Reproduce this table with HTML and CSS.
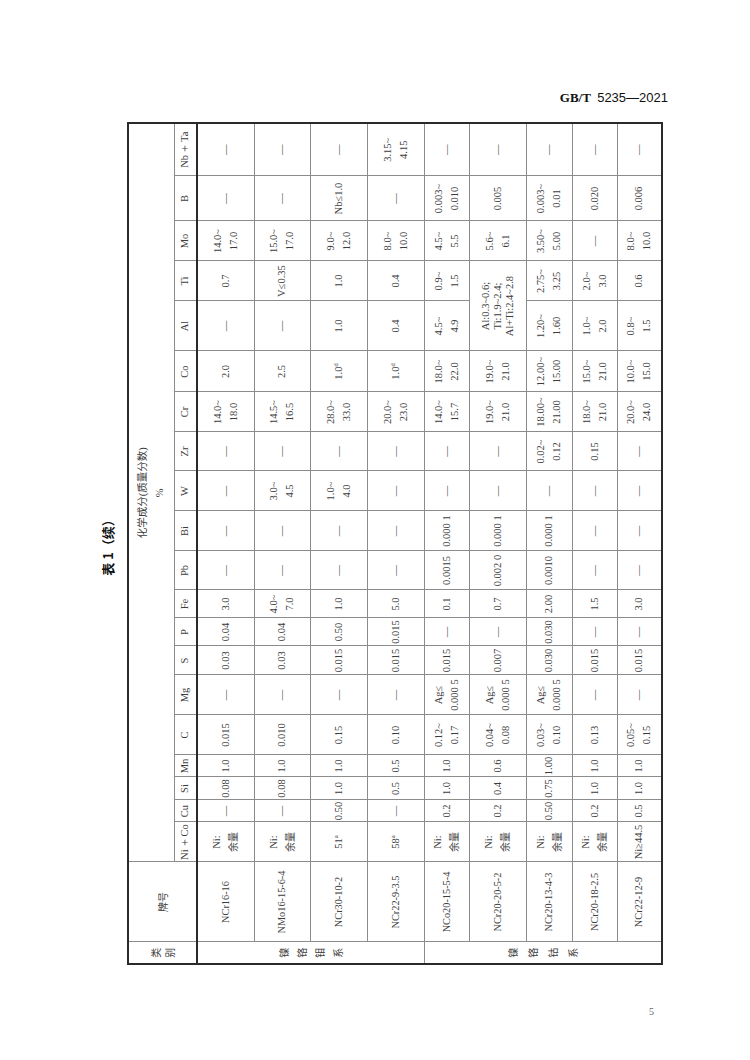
FILE: index.html
```html
<!DOCTYPE html>
<html lang="zh">
<head>
<meta charset="utf-8">
<title>GB/T 5235—2021 表1（续）</title>
<link rel="stylesheet" href="styles.css">
</head>
<body>
<div class="page">
  <div class="doc-head"><span class="std">GB/T</span> <span class="num">5235—2021</span></div>
  <div class="rot-box">
    <div class="sheet">
      <div class="caption">表 1（续）</div>
      <table class="chem">
        <colgroup>
          <col class="w22"><col class="w80"><col class="w40"><col class="w22"><col class="w23"><col class="w22"><col class="w40"><col class="w40"><col class="w29"><col class="w28"><col class="w28"><col class="w39"><col class="w40"><col class="w40"><col class="w39"><col class="w40"><col class="w41"><col class="w50"><col class="w40"><col class="w40"><col class="w45"><col class="w53">
        </colgroup>
        <thead>
          <tr class="h46">
            <th rowspan="2" class="cat-h">类<br>别</th>
            <th rowspan="2" class="grade-h">牌号</th>
            <th colspan="20" class="comp">化学成分(质量分数)<br>%</th>
          </tr>
          <tr class="h23 el">
            <th>Ni<span class="plus">＋</span>Co</th><th>Cu</th><th>Si</th><th>Mn</th><th>C</th><th>Mg</th><th>S</th><th>P</th><th>Fe</th><th>Pb</th><th>Bi</th><th>W</th><th>Zr</th><th>Cr</th><th>Co</th><th>Al</th><th>Ti</th><th>Mo</th><th>B</th><th>Nb<span class="plus">＋</span>Ta</th>
          </tr>
        </thead>
        <tbody>
          <tr class="h57">
            <td rowspan="4" class="cat cat1">镍<br>铬<br>钼<br>系</td>
            <td class="grade">NCr16-16</td>
            <td>Ni:<br><span class="cjk">余量</span></td><td>—</td><td>0.08</td><td>1.0</td><td>0.015</td><td>—</td><td>0.03</td><td>0.04</td><td>3.0</td><td>—</td><td>—</td><td>—</td><td>—</td><td>14.0~<br>18.0</td><td>2.0</td><td>—</td><td>0.7</td><td>14.0~<br>17.0</td><td>—</td><td>—</td>
          </tr>
          <tr class="h56">
            <td class="grade">NMo16-15-6-4</td>
            <td>Ni:<br><span class="cjk">余量</span></td><td>—</td><td>0.08</td><td>1.0</td><td>0.010</td><td>—</td><td>0.03</td><td>0.04</td><td>4.0~<br>7.0</td><td>—</td><td>—</td><td>3.0~<br>4.5</td><td>—</td><td>14.5~<br>16.5</td><td>2.5</td><td>—</td><td>V≤0.35</td><td>15.0~<br>17.0</td><td>—</td><td>—</td>
          </tr>
          <tr class="h57">
            <td class="grade">NCr30-10-2</td>
            <td>51<sup class="fn">a</sup></td><td>0.50</td><td>1.0</td><td>1.0</td><td>0.15</td><td>—</td><td>0.015</td><td>0.50</td><td>1.0</td><td>—</td><td>—</td><td>1.0~<br>4.0</td><td>—</td><td>28.0~<br>33.0</td><td>1.0<sup class="fn">d</sup></td><td>1.0</td><td>1.0</td><td>9.0~<br>12.0</td><td>Nb≤1.0</td><td>—</td>
          </tr>
          <tr class="h57 grp-end">
            <td class="grade">NCr22-9-3.5</td>
            <td>58<sup class="fn">a</sup></td><td>—</td><td>0.5</td><td>0.5</td><td>0.10</td><td>—</td><td>0.015</td><td>0.015</td><td>5.0</td><td>—</td><td>—</td><td>—</td><td>—</td><td>20.0~<br>23.0</td><td>1.0<sup class="fn">d</sup></td><td>0.4</td><td>0.4</td><td>8.0~<br>10.0</td><td>—</td><td>3.15~<br>4.15</td>
          </tr>
          <tr class="h45">
            <td rowspan="5" class="cat cat2">镍<br>铬<br>钴<br>系</td>
            <td class="grade">NCo20-15-5-4</td>
            <td>Ni:<br><span class="cjk">余量</span></td><td>0.2</td><td>1.0</td><td>1.0</td><td>0.12~<br>0.17</td><td>Ag≤<br>0.000 5</td><td>0.015</td><td>—</td><td>0.1</td><td>0.0015</td><td>0.000 1</td><td>—</td><td>—</td><td>14.0~<br>15.7</td><td>18.0~<br>22.0</td><td>4.5~<br>4.9</td><td>0.9~<br>1.5</td><td>4.5~<br>5.5</td><td>0.003~<br>0.010</td><td>—</td>
          </tr>
          <tr class="h57">
            <td class="grade">NCr20-20-5-2</td>
            <td>Ni:<br><span class="cjk">余量</span></td><td>0.2</td><td>0.4</td><td>0.6</td><td>0.04~<br>0.08</td><td>Ag≤<br>0.000 5</td><td>0.007</td><td>—</td><td>0.7</td><td>0.002 0</td><td>0.000 1</td><td>—</td><td>—</td><td>19.0~<br>21.0</td><td>19.0~<br>21.0</td><td colspan="2" class="alti">Al:0.3~0.6;<br>Ti:1.9~2.4;<br>Al+Ti:2.4~2.8</td><td>5.6~<br>6.1</td><td>0.005</td><td>—</td>
          </tr>
          <tr class="h46">
            <td class="grade">NCr20-13-4-3</td>
            <td>Ni:<br><span class="cjk">余量</span></td><td>0.50</td><td>0.75</td><td>1.00</td><td>0.03~<br>0.10</td><td>Ag≤<br>0.000 5</td><td>0.030</td><td>0.030</td><td>2.00</td><td>0.0010</td><td>0.000 1</td><td>—</td><td>0.02~<br>0.12</td><td>18.00~<br>21.00</td><td>12.00~<br>15.00</td><td>1.20~<br>1.60</td><td>2.75~<br>3.25</td><td>3.50~<br>5.00</td><td>0.003~<br>0.01</td><td>—</td>
          </tr>
          <tr class="h45">
            <td class="grade">NCr20-18-2.5</td>
            <td>Ni:<br><span class="cjk">余量</span></td><td>0.2</td><td>1.0</td><td>1.0</td><td>0.13</td><td>—</td><td>0.015</td><td>—</td><td>1.5</td><td>—</td><td>—</td><td>—</td><td>0.15</td><td>18.0~<br>21.0</td><td>15.0~<br>21.0</td><td>1.0~<br>2.0</td><td>2.0~<br>3.0</td><td>—</td><td>0.020</td><td>—</td>
          </tr>
          <tr class="h45">
            <td class="grade">NCr22-12-9</td>
            <td class="nw">Ni≥44.5</td><td>0.5</td><td>1.0</td><td>1.0</td><td>0.05~<br>0.15</td><td>—</td><td>0.015</td><td>—</td><td>3.0</td><td>—</td><td>—</td><td>—</td><td>—</td><td>20.0~<br>24.0</td><td>10.0~<br>15.0</td><td>0.8~<br>1.5</td><td>0.6</td><td>8.0~<br>10.0</td><td>0.006</td><td>—</td>
          </tr>
        </tbody>
      </table>
    </div>
  </div>
  <div class="folio">5</div>
</div>
</body>
</html>
```

FILE: styles.css
```css
html, body {
  margin: 0;
  padding: 0;
  background: #ffffff;
}

.page {
  width: 750px;
  height: 1060px;
  overflow: hidden;
  color: #3c3c3c;
  font-family: "Liberation Serif", "Noto Sans CJK SC", serif;
}

.doc-head {
  margin: 90px 82px 0 0;
  height: 16px;
  line-height: 16px;
  text-align: right;
  font-size: 13px;
  color: #111;
  white-space: nowrap;
}

.doc-head .std {
  font-family: "Liberation Serif", serif;
  font-weight: bold;
}

.doc-head .num {
  font-family: "Liberation Sans", sans-serif;
  margin-left: 3px;
}

.rot-box {
  margin: 18px 0 0 90px;
  width: 571px;
  height: 841px;
}

.sheet {
  width: 841px;
  transform-origin: 0 0;
  transform: rotate(-90deg) translateX(-100%);
}

.caption {
  height: 37px;
  line-height: 36px;
  text-align: center;
  font-family: "Noto Sans CJK SC", sans-serif;
  font-weight: bold;
  font-size: 13px;
  color: #111;
  white-space: nowrap;
}

.chem {
  width: 841px;
  table-layout: fixed;
  border-collapse: collapse;
  border: 2px solid #2a2a2a;
  font-size: 10.5px;
  line-height: 16px;
}

.chem th,
.chem td {
  border: 1px solid #8c8c8c;
  padding: 0;
  text-align: center;
  vertical-align: middle;
  font-weight: normal;
  white-space: nowrap;
  overflow: visible;
}

.chem thead tr.el th {
  border-bottom: 2px solid #2a2a2a;
  font-size: 10.5px;
}

.chem thead th.cat-h,
.chem thead th.grade-h {
  border-bottom: 2px solid #2a2a2a;
  font-family: "Noto Sans CJK SC", sans-serif;
  font-size: 10px;
}

.chem thead th.cat-h {
  line-height: 14px;
}

.chem thead th.comp {
  font-family: "Liberation Serif", "Noto Sans CJK SC", serif;
  font-size: 10.5px;
  line-height: 17px;
}

.plus {
  font-family: "Liberation Serif", serif;
  padding: 0 1px;
}

.cjk {
  font-family: "Noto Sans CJK SC", sans-serif;
  font-size: 10px;
}

.cat {
  font-family: "Noto Sans CJK SC", sans-serif;
  font-size: 10px;
}

.cat1 {
  line-height: 18px;
}

.cat2 {
  line-height: 20px;
}

.grade {
  font-size: 10.3px;
}

.fn {
  font-size: 6.5px;
  line-height: 0;
  vertical-align: 4px;
}

.alti {
  line-height: 12px;
  padding-top: 12px;
}

col.w22 { width: 22px; }
col.w23 { width: 23px; }
col.w28 { width: 28px; }
col.w29 { width: 29px; }
col.w39 { width: 39px; }
col.w40 { width: 40px; }
col.w41 { width: 41px; }
col.w45 { width: 45px; }
col.w50 { width: 50px; }
col.w53 { width: 53px; }
col.w80 { width: 80px; }

tr.h23 { height: 23px; }
tr.h45 { height: 45px; }
tr.h46 { height: 46px; }
tr.h56 { height: 56px; }
tr.h57 { height: 57px; }

.folio {
  margin-top: 40px;
  padding-right: 96px;
  text-align: right;
  font-size: 10px;
  line-height: 14px;
  color: #666;
}
```
